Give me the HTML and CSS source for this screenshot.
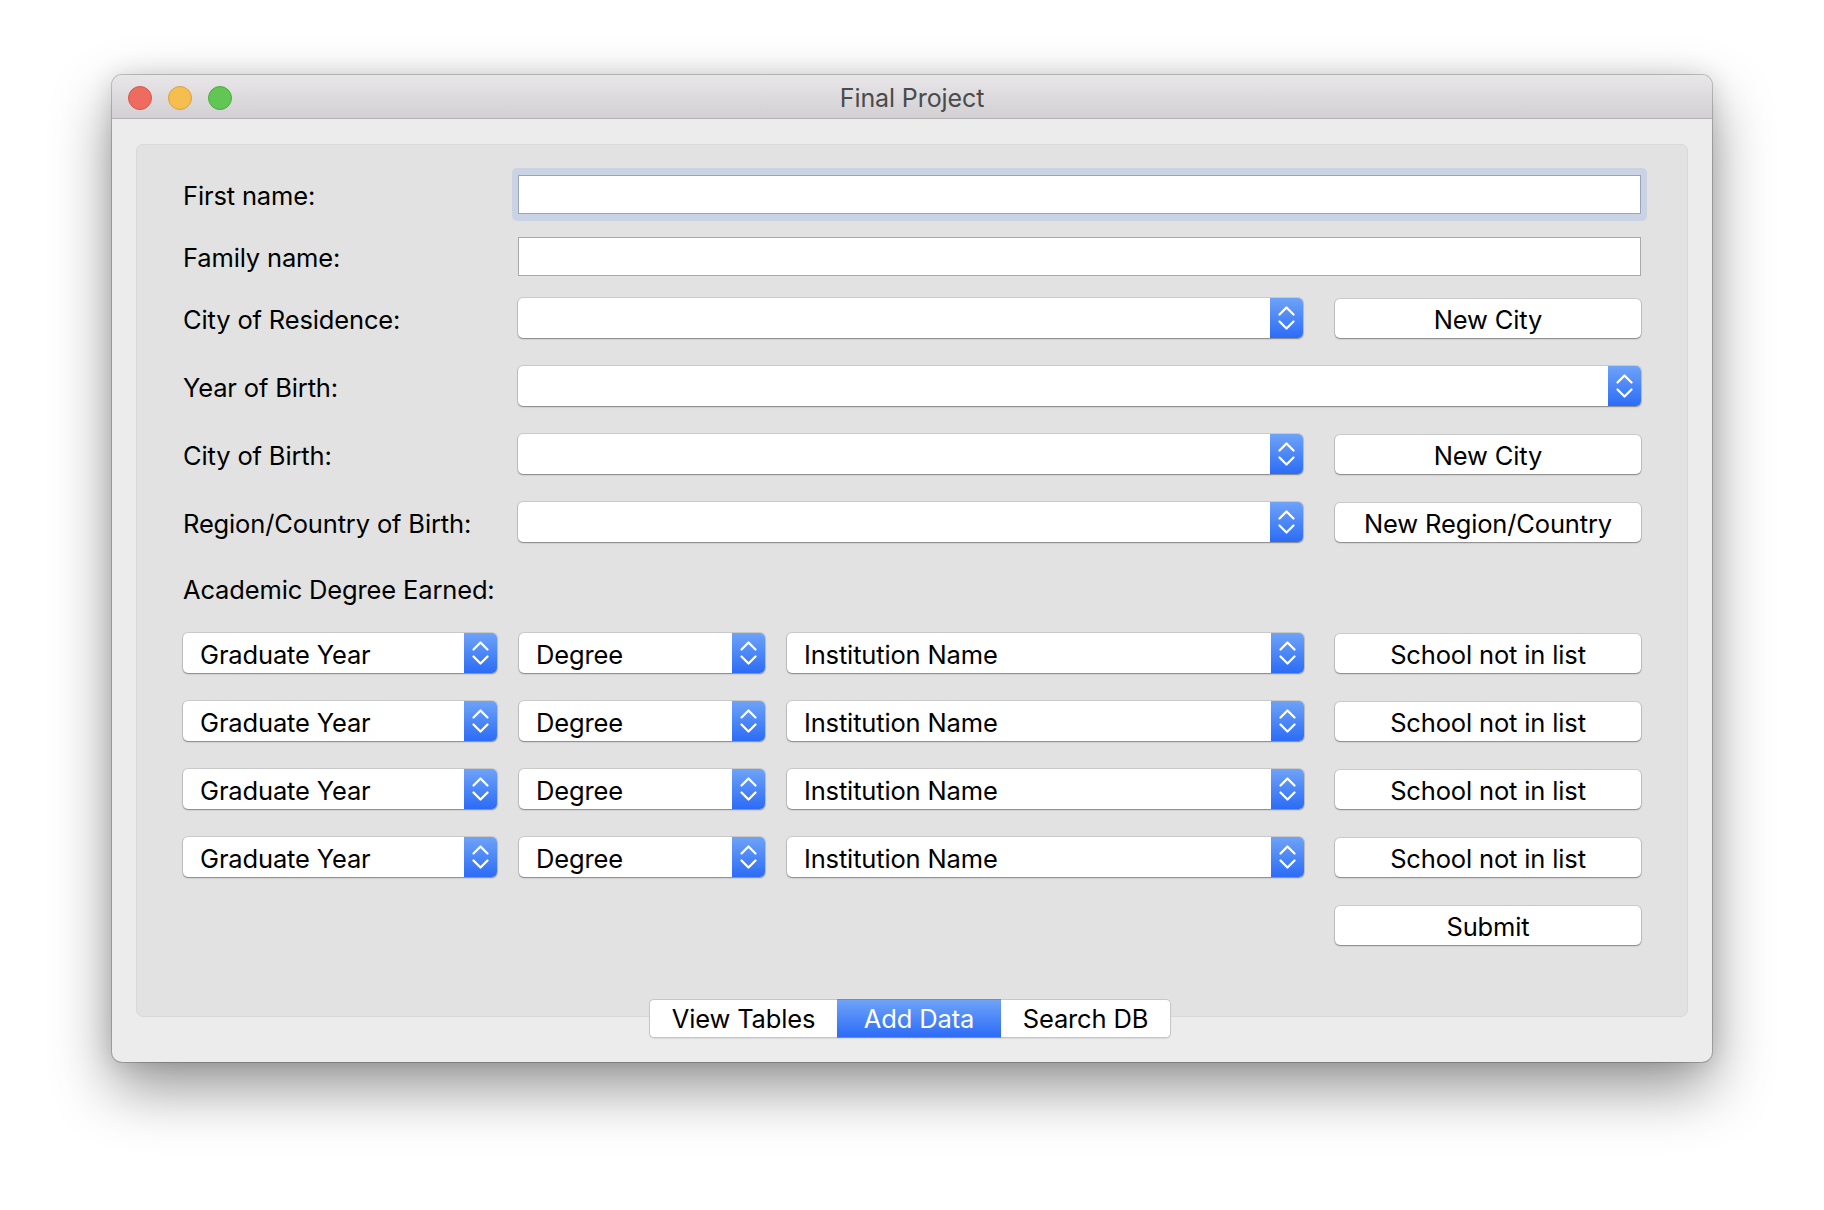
FILE: index.html
```html
<!DOCTYPE html>
<html lang="en">
<head>
<meta charset="utf-8">
<title>Final Project</title>
<link rel="stylesheet" href="styles.css">
</head>
<body>
<div class="window">
  <div class="titlebar">
    <div class="lights">
      <span class="light red"></span>
      <span class="light yellow"></span>
      <span class="light green"></span>
    </div>
    <div class="title">Final Project</div>
    <div></div>
  </div>
  <div class="window-body">
    <div class="panel">
      <div class="form">
        <div class="row r-field">
          <div class="label">First name:</div>
          <div class="focus-ring"><div class="textfield focused"></div></div>
        </div>
        <div class="row r-field gap23">
          <div class="label">Family name:</div>
          <div class="textfield"></div>
        </div>
        <div class="row gap22">
          <div class="label">City of Residence:</div>
          <div class="combo wide"><span class="combo-text"></span><span class="stepper"><svg viewBox="0 0 33 40" width="33" height="40"><path d="M9.5 16.5 L16.5 9.5 L23.5 16.5 M9.5 23.5 L16.5 30.5 L23.5 23.5"/></svg></span></div>
          <div class="button side">New City</div>
        </div>
        <div class="row">
          <div class="label">Year of Birth:</div>
          <div class="combo full"><span class="combo-text"></span><span class="stepper"><svg viewBox="0 0 33 40" width="33" height="40"><path d="M9.5 16.5 L16.5 9.5 L23.5 16.5 M9.5 23.5 L16.5 30.5 L23.5 23.5"/></svg></span></div>
        </div>
        <div class="row">
          <div class="label">City of Birth:</div>
          <div class="combo wide"><span class="combo-text"></span><span class="stepper"><svg viewBox="0 0 33 40" width="33" height="40"><path d="M9.5 16.5 L16.5 9.5 L23.5 16.5 M9.5 23.5 L16.5 30.5 L23.5 23.5"/></svg></span></div>
          <div class="button side">New City</div>
        </div>
        <div class="row">
          <div class="label">Region/Country of Birth:</div>
          <div class="combo wide"><span class="combo-text"></span><span class="stepper"><svg viewBox="0 0 33 40" width="33" height="40"><path d="M9.5 16.5 L16.5 9.5 L23.5 16.5 M9.5 23.5 L16.5 30.5 L23.5 23.5"/></svg></span></div>
          <div class="button side">New Region/Country</div>
        </div>
        <div class="row gap26">
          <div class="label section">Academic Degree Earned:</div>
        </div>

        <div class="row grad-row gap25">
          <div class="combo c-year"><span class="combo-text">Graduate Year</span><span class="stepper"><svg viewBox="0 0 33 40" width="33" height="40"><path d="M9.5 16.5 L16.5 9.5 L23.5 16.5 M9.5 23.5 L16.5 30.5 L23.5 23.5"/></svg></span></div>
          <div class="combo c-degree"><span class="combo-text">Degree</span><span class="stepper"><svg viewBox="0 0 33 40" width="33" height="40"><path d="M9.5 16.5 L16.5 9.5 L23.5 16.5 M9.5 23.5 L16.5 30.5 L23.5 23.5"/></svg></span></div>
          <div class="combo c-inst"><span class="combo-text">Institution Name</span><span class="stepper"><svg viewBox="0 0 33 40" width="33" height="40"><path d="M9.5 16.5 L16.5 9.5 L23.5 16.5 M9.5 23.5 L16.5 30.5 L23.5 23.5"/></svg></span></div>
          <div class="button side">School not in list</div>
        </div>
        <div class="row grad-row">
          <div class="combo c-year"><span class="combo-text">Graduate Year</span><span class="stepper"><svg viewBox="0 0 33 40" width="33" height="40"><path d="M9.5 16.5 L16.5 9.5 L23.5 16.5 M9.5 23.5 L16.5 30.5 L23.5 23.5"/></svg></span></div>
          <div class="combo c-degree"><span class="combo-text">Degree</span><span class="stepper"><svg viewBox="0 0 33 40" width="33" height="40"><path d="M9.5 16.5 L16.5 9.5 L23.5 16.5 M9.5 23.5 L16.5 30.5 L23.5 23.5"/></svg></span></div>
          <div class="combo c-inst"><span class="combo-text">Institution Name</span><span class="stepper"><svg viewBox="0 0 33 40" width="33" height="40"><path d="M9.5 16.5 L16.5 9.5 L23.5 16.5 M9.5 23.5 L16.5 30.5 L23.5 23.5"/></svg></span></div>
          <div class="button side">School not in list</div>
        </div>
        <div class="row grad-row">
          <div class="combo c-year"><span class="combo-text">Graduate Year</span><span class="stepper"><svg viewBox="0 0 33 40" width="33" height="40"><path d="M9.5 16.5 L16.5 9.5 L23.5 16.5 M9.5 23.5 L16.5 30.5 L23.5 23.5"/></svg></span></div>
          <div class="combo c-degree"><span class="combo-text">Degree</span><span class="stepper"><svg viewBox="0 0 33 40" width="33" height="40"><path d="M9.5 16.5 L16.5 9.5 L23.5 16.5 M9.5 23.5 L16.5 30.5 L23.5 23.5"/></svg></span></div>
          <div class="combo c-inst"><span class="combo-text">Institution Name</span><span class="stepper"><svg viewBox="0 0 33 40" width="33" height="40"><path d="M9.5 16.5 L16.5 9.5 L23.5 16.5 M9.5 23.5 L16.5 30.5 L23.5 23.5"/></svg></span></div>
          <div class="button side">School not in list</div>
        </div>
        <div class="row grad-row">
          <div class="combo c-year"><span class="combo-text">Graduate Year</span><span class="stepper"><svg viewBox="0 0 33 40" width="33" height="40"><path d="M9.5 16.5 L16.5 9.5 L23.5 16.5 M9.5 23.5 L16.5 30.5 L23.5 23.5"/></svg></span></div>
          <div class="combo c-degree"><span class="combo-text">Degree</span><span class="stepper"><svg viewBox="0 0 33 40" width="33" height="40"><path d="M9.5 16.5 L16.5 9.5 L23.5 16.5 M9.5 23.5 L16.5 30.5 L23.5 23.5"/></svg></span></div>
          <div class="combo c-inst"><span class="combo-text">Institution Name</span><span class="stepper"><svg viewBox="0 0 33 40" width="33" height="40"><path d="M9.5 16.5 L16.5 9.5 L23.5 16.5 M9.5 23.5 L16.5 30.5 L23.5 23.5"/></svg></span></div>
          <div class="button side">School not in list</div>
        </div>
        <div class="row submit-row">
          <div class="button side">Submit</div>
        </div>
      </div>
    </div>
    <div class="tabs">
      <div class="tab t-view">View Tables</div>
      <div class="tab t-add selected">Add Data</div>
      <div class="tab t-search">Search DB</div>
    </div>
  </div>
</div>
</body>
</html>
```

FILE: styles.css
```css
* { box-sizing: border-box; }

html, body {
  margin: 0;
  padding: 0;
  background: #ffffff;
}

body {
  min-height: 1210px;
  padding: 75px 0 0 112px;
  font-family: "Inter", "Liberation Sans", "DejaVu Sans", sans-serif;
  color: #000;
  -webkit-font-smoothing: antialiased;
}

.window {
  width: 1600px;
  height: 987px;
  border-radius: 10px;
  background: #ececec;
  overflow: hidden;
  box-shadow: 0 0 0 1px rgba(0, 0, 0, 0.2), 0 26px 60px rgba(0, 0, 0, 0.42), 0 0 24px rgba(0, 0, 0, 0.12);
}

/* ---------- title bar ---------- */
.titlebar {
  height: 44px;
  display: grid;
  grid-template-columns: 1fr auto 1fr;
  align-items: center;
  background: linear-gradient(#e8e6e8, #d2d0d2);
  border-bottom: 1px solid #b4b4b4;
}

.lights {
  display: flex;
  gap: 16px;
  padding-left: 16px;
  padding-top: 2px;
}

.light {
  width: 24px;
  height: 24px;
  border-radius: 50%;
  display: block;
}
.light.red { background: #ee6b60; border: 1px solid #d8554b; }
.light.yellow { background: #f6be4f; border: 1px solid #d9a140; }
.light.green { background: #62c655; border: 1px solid #52a93f; }

.title {
  font-size: 25px;
  color: #4b4b4b;
  letter-spacing: -0.1px;
  padding-top: 3px;
}

/* ---------- body ---------- */
.window-body {
  padding: 25px 24px 0 24px;
}

.panel {
  height: 873px;
  background: #e2e2e2;
  border: 1px solid #d8d8d8;
  border-radius: 7px;
  padding: 30px 46px 0 46px;
}

.form {
  display: flex;
  flex-direction: column;
}

.row {
  display: flex;
  align-items: center;
  height: 40px;
  margin-top: 28px;
}
.row:first-child { margin-top: 0; }
.row.r-field { height: 39px; }
.row.gap23 { margin-top: 23px; }
.row.gap22 { margin-top: 22px; }
.row.gap26 { margin-top: 26px; }
.row.gap25 { margin-top: 25px; }

.label, .combo-text, .button, .tab {
  font-size: 25.5px;
  letter-spacing: -0.15px;
  line-height: 1;
  white-space: nowrap;
  padding-top: 3px;
}

.label {
  width: 335px;
  flex: none;
}
.label.section { width: auto; }

/* ---------- text fields ---------- */
.textfield {
  flex: 1;
  height: 39px;
  background: #fff;
  border: 1px solid #a9a9a9;
}

.focus-ring {
  flex: 1;
  display: flex;
  margin: -7px -6px -7px -6px;
  padding: 7px 6px;
  border-radius: 5px;
  background: #c9d3e4;
}
.textfield.focused {
  border-color: #97a5bd;
}

/* ---------- combo boxes ---------- */
.combo {
  height: 40px;
  display: flex;
  align-items: center;
  background: #fff;
  border-radius: 5px;
  box-shadow: 0 0 0 1px rgba(0, 0, 0, 0.1), 0 1px 1.5px rgba(0, 0, 0, 0.35);
  overflow: hidden;
  flex: none;
}
.combo.wide { width: 785px; }
.combo.full { flex: 1; }
.combo.c-year { width: 314px; }
.combo.c-degree { width: 246px; margin-left: 22px; }
.combo.c-inst { width: 517px; margin-left: 22px; }

.combo-text {
  flex: 1;
  padding-left: 17px;
}

.stepper {
  width: 33px;
  height: 40px;
  flex: none;
  background: linear-gradient(#6ea3f8, #2c6cf6);
  display: block;
}
.stepper svg {
  display: block;
  fill: none;
  stroke: #fff;
  stroke-width: 2.3;
  stroke-linecap: round;
  stroke-linejoin: round;
}

/* ---------- buttons ---------- */
.button {
  height: 39px;
  display: flex;
  align-items: center;
  justify-content: center;
  background: #fff;
  border-radius: 5px;
  box-shadow: 0 0 0 1px rgba(0, 0, 0, 0.1), 0 1px 1.5px rgba(0, 0, 0, 0.35);
}
.button.side {
  width: 306px;
  margin-left: auto;
  flex: none;
}

.submit-row { height: 39px; margin-top: 29px; }

/* ---------- segmented tabs ---------- */
.tabs {
  display: flex;
  justify-content: center;
  margin-top: -18px;
  padding-right: 4px;
}
.tab {
  height: 39px;
  display: flex;
  align-items: center;
  justify-content: center;
  background: #fff;
  border-top: 1px solid #c6c6c6;
  border-bottom: 1px solid #c6c6c6;
  box-shadow: 0 1px 1px rgba(0, 0, 0, 0.08);
  padding-top: 0;
}
.tab.t-view { width: 188px; border-left: 1px solid #c6c6c6; border-radius: 5px 0 0 5px; }
.tab.t-add { width: 164px; }
.tab.t-search { width: 170px; border-right: 1px solid #c6c6c6; border-radius: 0 5px 5px 0; }
.tab.selected {
  background: linear-gradient(#6ea3f8, #2c6cf6);
  color: #fff;
  border-color: #5a8ff2;
}
```
